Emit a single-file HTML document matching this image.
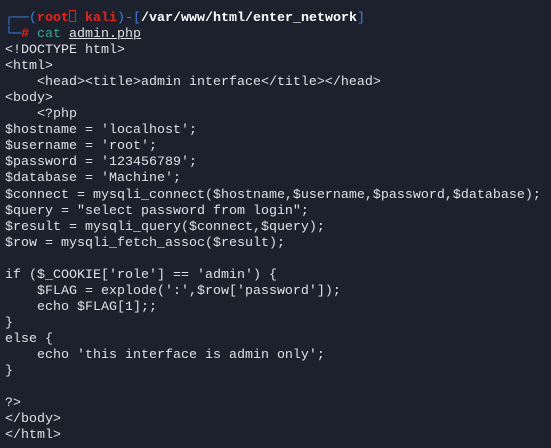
<!DOCTYPE html>
<html><head><style>
html,body{margin:0;padding:0;background:#1d212d;width:551px;height:448px;overflow:hidden}
pre{margin:0;position:absolute;left:5px;top:10px;font-family:"Liberation Mono","Noto Sans CJK JP",monospace;font-size:13.33px;line-height:16.05px;color:#dfe1e6}
.b{color:#3d7fe0}.r{color:#e8231a;font-weight:bold}.w{color:#fff;font-weight:bold}.c{color:#3ca59a}.u{text-decoration:underline}
.x{display:inline-block;width:5px;height:10px;border:1px solid #e8231a;vertical-align:-1px;margin:0 1px 0 0}
</style></head><body>
<pre><span class="b">┌──(</span><span class="r">root<span class="x"></span> kali</span><span class="b">)-[</span><span class="w">/var/www/html/enter_network</span><span class="b">]</span>
<span class="b">└─</span><span class="r">#</span> <span class="c">cat</span> <span class="u">admin.php</span>
&lt;!DOCTYPE html&gt;
&lt;html&gt;
    &lt;head&gt;&lt;title&gt;admin interface&lt;/title&gt;&lt;/head&gt;
&lt;body&gt;
    &lt;?php
$hostname = 'localhost';
$username = 'root';
$password = '123456789';
$database = 'Machine';
$connect = mysqli_connect($hostname,$username,$password,$database);
$query = "select password from login";
$result = mysqli_query($connect,$query);
$row = mysqli_fetch_assoc($result);

if ($_COOKIE['role'] == 'admin') {
    $FLAG = explode(':',$row['password']);
    echo $FLAG[1];;
}
else {
    echo 'this interface is admin only';
}

?&gt;
&lt;/body&gt;
&lt;/html&gt;</pre>
</body></html>
